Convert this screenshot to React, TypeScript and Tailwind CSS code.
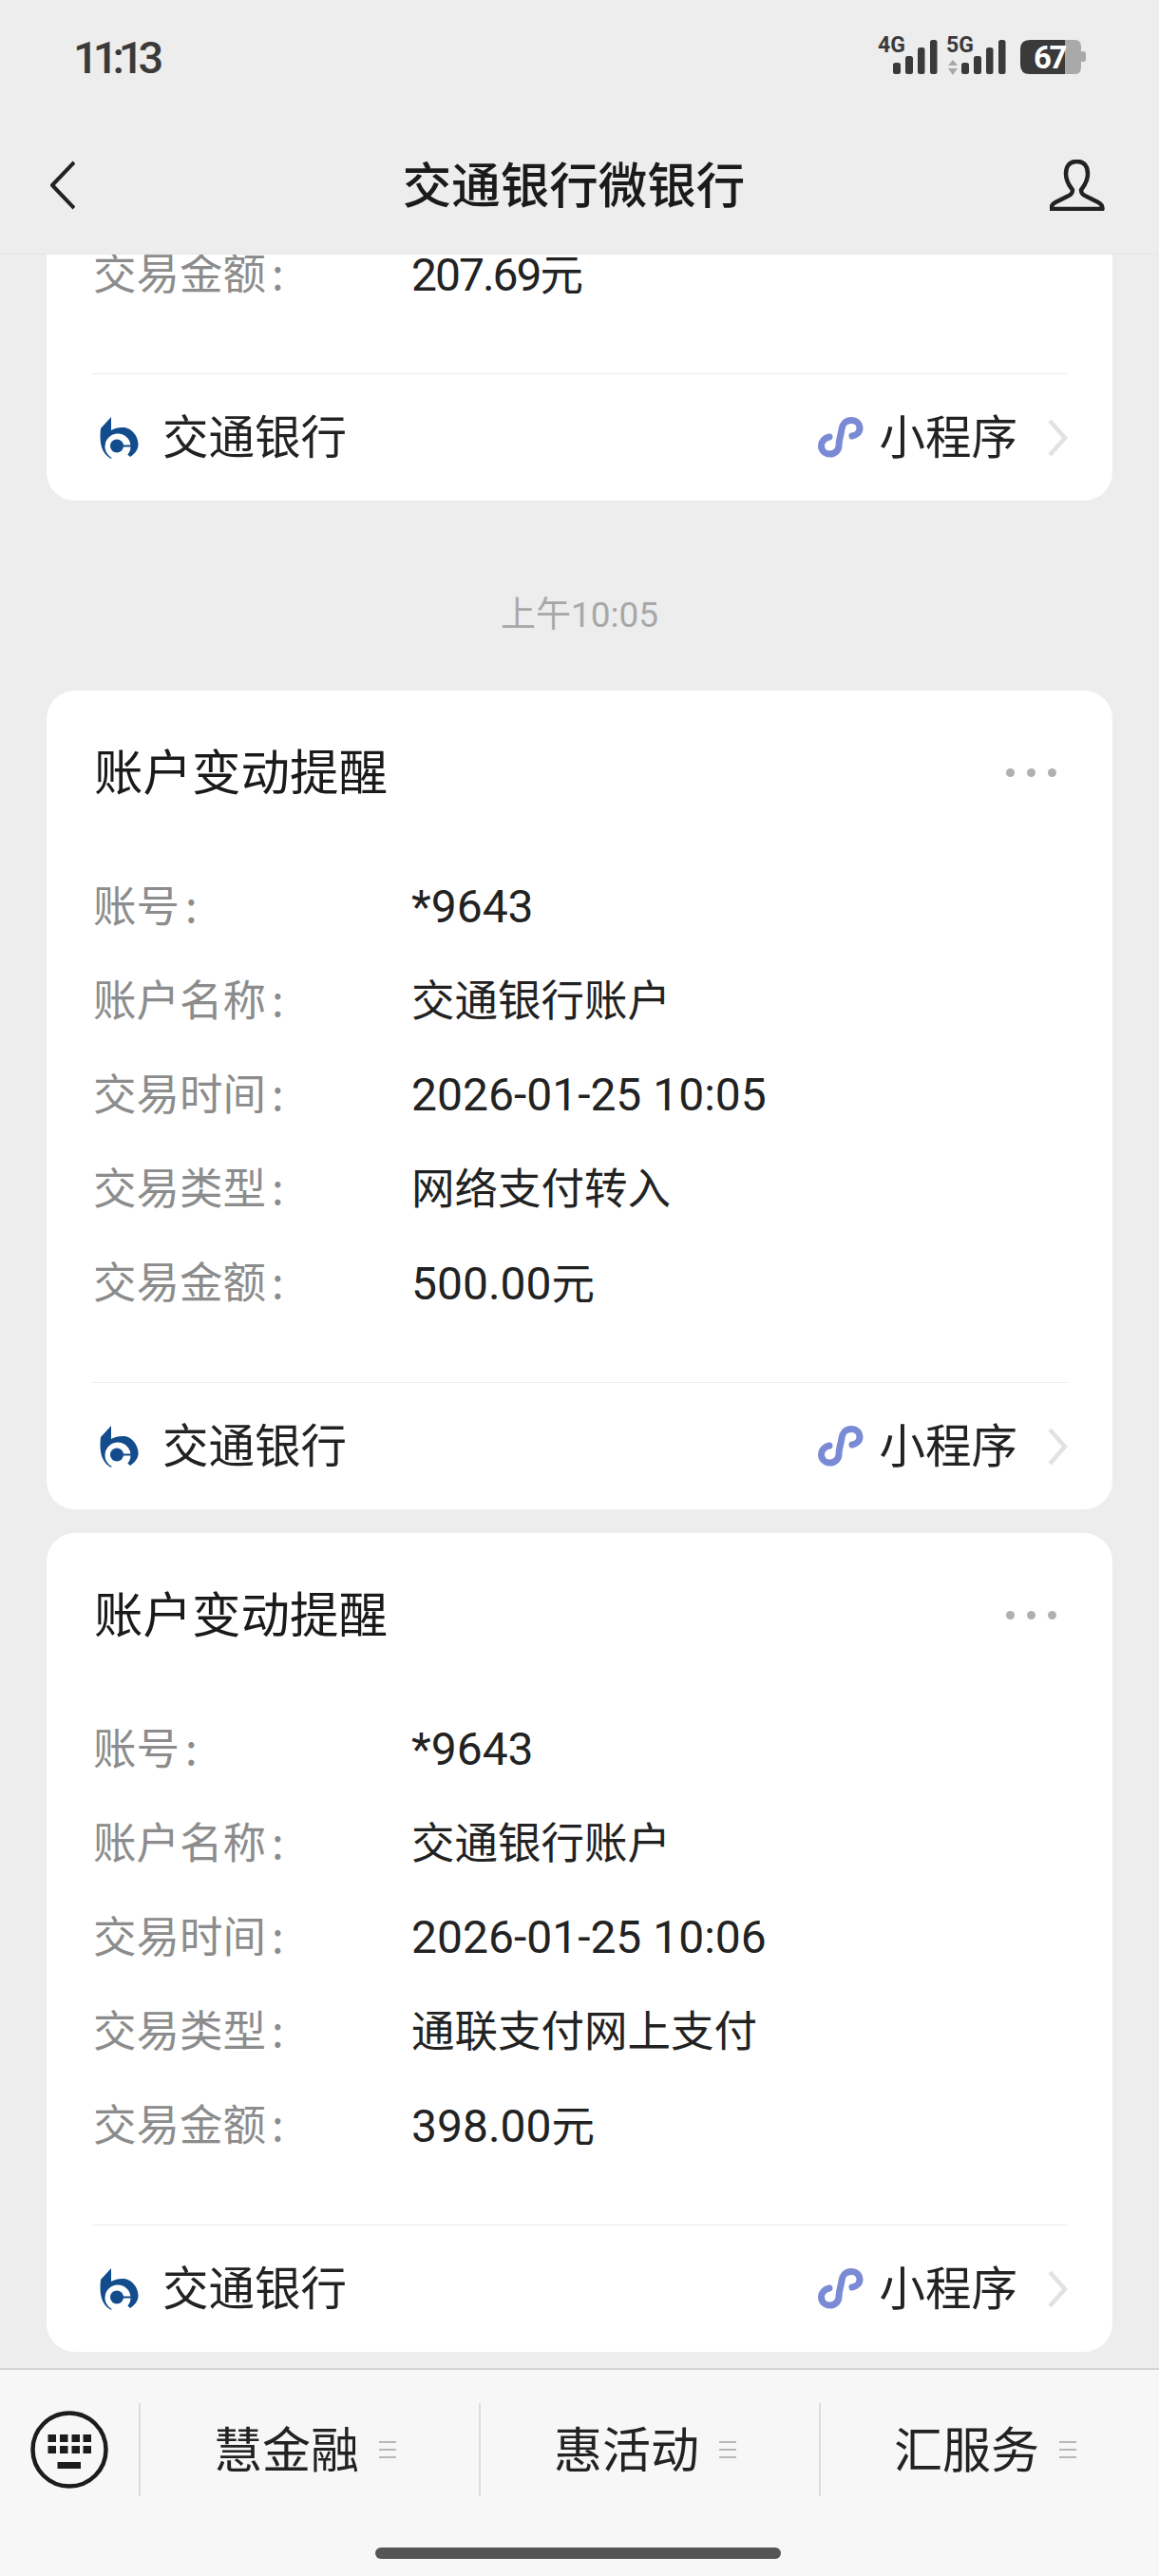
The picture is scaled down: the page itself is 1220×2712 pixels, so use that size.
const cards = [
  {
    id: 'a',
    time: '2026-01-25 10:05',
    type: '网络支付转入',
    amount: '500.00',
  },
  {
    id: 'b',
    time: '2026-01-25 10:06',
    type: '通联支付网上支付',
    amount: '398.00',
  },
];

function BankLogo() {
  return (
    <svg width="54" height="56" viewBox="0 0 54 56" className="shrink-0">
      <path
        d="M17 6 L6 18 C4.5 32 6 44 17 50 L24 36 L37 48 C43 44 46 39 45.5 34 C45 26 39 18 31 17 C26 16.5 21 17.5 17 20 Z"
        fill="#124c8c"
      />
      <circle cx="24" cy="37" r="13.5" fill="#fff" />
      <circle cx="23" cy="36.5" r="7" fill="#124c8c" />
      <path d="M23 36.5 H40" stroke="#124c8c" strokeWidth="2" />
    </svg>
  );
}

function MiniIcon() {
  return (
    <svg width="48" height="43" viewBox="0 0 48 43" className="shrink-0">
      <path
        d="M36 20 C41 19 44 16 44 12 C44 7 40 3.5 35 3.5 C29 3.5 25.5 8 25 13 C24 20 22 24 22 30 C22 35 18 39 12.5 39 C7 39 3.5 35 3.5 30 C3.5 26 7 22 12 21"
        fill="none"
        stroke="#7b8ad4"
        strokeWidth="7"
        strokeLinecap="round"
      />
    </svg>
  );
}

function Footer() {
  return (
    <div className="flex h-[133px] items-center justify-between pl-[51px] pr-[46px]">
      <div className="flex items-center gap-[17px]">
        <BankLogo />
        <span className="pb-[7px] text-[48.5px] leading-none text-[#222]">交通银行</span>
      </div>
      <div className="flex items-center">
        <MiniIcon />
        <span className="ml-[16px] pb-[7px] text-[48.5px] leading-none text-[#222]">小程序</span>
        <svg width="24" height="42" viewBox="0 0 24 42" className="ml-[30px]">
          <path d="M4 3 L20 21 L4 39" fill="none" stroke="#e2e2e2" strokeWidth="4.5" />
        </svg>
      </div>
    </div>
  );
}

function Row({ label, num, cjk, tight }: { label: string; num?: string; cjk?: string; tight?: boolean }) {
  return (
    <div className="flex h-[99px] items-center pl-[49px]">
      <span className="w-[335px] shrink-0 pb-[6px] text-[45.5px] text-[#8c8c8c]">
        {label}
        <span className="ml-[6px]">:</span>
      </span>
      <span className={num ? 'text-[#222]' : 'pb-[6px] text-[#222]'}>
        {num && (
          <span className={tight ? "font-['Roboto',sans-serif] text-[48px] tracking-[-2px]" : "font-['Roboto',sans-serif] text-[48px]"}>
            {num}
          </span>
        )}
        {cjk && <span className="text-[45.5px]">{cjk}</span>}
      </span>
    </div>
  );
}

function Card({ time, type, amount }: { time: string; type: string; amount: string }) {
  return (
    <div className="mx-[49px] rounded-[30px] bg-white pt-[56px]">
      <div className="flex h-[60px] items-center justify-between pl-[50px] pr-[59px]">
        <span className="pb-[6px] text-[51.5px] leading-none text-[#1a1a1a]">账户变动提醒</span>
        <div className="flex gap-[13px]">
          <div className="h-[9px] w-[9px] rounded-full bg-[#b0b0b0]" />
          <div className="h-[9px] w-[9px] rounded-full bg-[#b0b0b0]" />
          <div className="h-[9px] w-[9px] rounded-full bg-[#b0b0b0]" />
        </div>
      </div>
      <div className="mt-[62px] mb-[55px]">
        <Row label="账号" num="*9643" />
        <Row label="账户名称" cjk="交通银行账户" />
        <Row label="交易时间" num={time} />
        <Row label="交易类型" cjk={type} />
        <Row label="交易金额" num={amount} cjk="元" />
      </div>
      <div className="mx-[48px] border-t border-[#ececec]" />
      <Footer />
    </div>
  );
}

function StatusIcons() {
  return (
    <svg width="300" height="80" viewBox="0 0 300 80">
      <text x="44" y="35" fontSize="23" fontWeight="700" fontFamily="Roboto, sans-serif" fill="#3a3a3a">4G</text>
      <rect x="60" y="46" width="8" height="12" rx="2.5" fill="#3a3a3a" />
      <rect x="73" y="39" width="8" height="19" rx="2.5" fill="#3a3a3a" />
      <rect x="86" y="30" width="7.5" height="28" rx="2.5" fill="#3a3a3a" />
      <rect x="99" y="22" width="7.5" height="36" rx="2.5" fill="#3a3a3a" />
      <text x="116" y="35" fontSize="23" fontWeight="700" fontFamily="Roboto, sans-serif" fill="#3a3a3a">5G</text>
      <path d="M123 43 L128 49 H118 Z M118 52 H128 L123 59 Z" fill="#a8a8a8" />
      <rect x="132" y="46" width="8" height="12" rx="2.5" fill="#3a3a3a" />
      <rect x="145" y="39" width="8" height="19" rx="2.5" fill="#3a3a3a" />
      <rect x="158" y="30" width="7.5" height="28" rx="2.5" fill="#3a3a3a" />
      <rect x="171" y="22" width="7.5" height="36" rx="2.5" fill="#3a3a3a" />
      <path d="M204 22 H241 V58 H204 Q194 58 194 48 V32 Q194 22 204 22 Z" fill="#3a3a3a" />
      <path d="M241 22 H252 Q258 22 258 30 V50 Q258 58 252 58 H241 Z" fill="#a9a9a9" />
      <rect x="257" y="34" width="6" height="11" rx="2.5" fill="#a9a9a9" />
      <text x="208" y="52" fontSize="33" fontWeight="700" letterSpacing="-2.5" fontFamily="Roboto, sans-serif" fill="#fff">67</text>
    </svg>
  );
}

function Header() {
  return (
    <header className="relative z-10 h-[268px] shrink-0 border-b border-[#e6e6e6] bg-[#ededed]">
      <div className="flex h-[100px] items-center justify-between pt-[20px] pl-[77px] pr-[40px]">
        <span className="font-['Roboto',sans-serif] text-[47px] font-medium leading-none tracking-[-6px] text-[#3a3a3a]">
          11:13
        </span>
        <StatusIcons />
      </div>
      <div className="mt-[60px] flex h-[70px] items-center justify-between pl-[53px] pr-[57px]">
        <div className="w-[50px]">
          <svg width="26" height="52" viewBox="0 0 26 52">
            <path d="M25 2 L2 26 L25 50" fill="none" stroke="#222" strokeWidth="4" strokeLinejoin="round" />
          </svg>
        </div>
        <span className="pb-[6px] text-[51.5px] font-medium leading-none text-[#1a1a1a]">交通银行微银行</span>
        <svg width="58" height="54" viewBox="16 18 58 54">
          <path
            d="M44.5 20 C36 20 33 26 33 33 C33 42 38 47 40 50 C40 54 38 55 34 57 L22 63 C18 65 17.5 67 17.5 70 H71.5 C71.5 67 71 65 67 63 L55 57 C51 55 49 54 49 50 C51 47 56 42 56 33 C56 26 53 20 44.5 20 Z"
            fill="none"
            stroke="#222"
            strokeWidth="4.5"
            strokeLinejoin="round"
          />
        </svg>
      </div>
    </header>
  );
}

function TabMenu({ label }: { label: string }) {
  return (
    <div className="flex w-[358px] items-center justify-center gap-[21px] border-l-2 border-[#dcdcdc] pr-[10px]">
      <span className="pb-[6px] text-[51px] leading-none text-[#222]">{label}</span>
      <div className="flex w-[18px] flex-col gap-[6px]">
        <div className="h-[2px] bg-[#b8b8b8]" />
        <div className="h-[2px] bg-[#b8b8b8]" />
        <div className="h-[2px] bg-[#b8b8b8]" />
      </div>
    </div>
  );
}

function BottomBar() {
  return (
    <footer className="h-[219px] shrink-0 border-t-2 border-[#d4d4d4] bg-[#f7f7f7] pt-[35px]">
      <div className="flex h-[98px]">
        <div className="flex w-[146px] shrink-0 items-center pl-[32px]">
          <svg width="82" height="82" viewBox="0 0 82 82">
            <ellipse cx="41" cy="41" rx="38.5" ry="38.5" fill="none" stroke="#1c1c1c" strokeWidth="4.5" />
            <g fill="#1c1c1c">
              <rect x="18.5" y="25" width="8.5" height="8" />
              <rect x="31" y="25" width="8.5" height="8" />
              <rect x="43.5" y="25" width="8.5" height="8" />
              <rect x="55.5" y="25" width="8.5" height="8" />
              <rect x="18.5" y="37" width="8.5" height="8" />
              <rect x="31" y="37" width="8.5" height="8" />
              <rect x="43.5" y="37" width="8.5" height="8" />
              <rect x="55.5" y="37" width="8.5" height="8" />
              <rect x="28.5" y="54" width="24.5" height="7" />
            </g>
          </svg>
        </div>
        <TabMenu label="慧金融" />
        <TabMenu label="惠活动" />
        <TabMenu label="汇服务" />
      </div>
      <div className="ml-[395px] mt-[54px] h-[12px] w-[427px] rounded-full bg-[#555]" />
    </footer>
  );
}

export default function App() {
  return (
    <div className="flex h-[2712px] w-[1220px] flex-col overflow-hidden bg-[#ededed] font-['Noto_Sans_CJK_SC',sans-serif]">
      <Header />
      <main className="min-h-0 flex-1 overflow-hidden">
        {/* top card scrolled under the header */}
        <div className="mx-[49px] -mt-[29px] rounded-b-[30px] bg-white">
          <Row label="交易金额" num="207.69" cjk="元" tight />
          <div className="mx-[48px] mt-[55px] border-t border-[#ececec]" />
          <Footer />
        </div>

        <div className="flex h-[200px] items-center justify-center pt-[42px] font-['Roboto','Noto_Sans_CJK_SC',sans-serif] text-[37px] text-[#a8a8a8]">
          上午10:05
        </div>

        <div className="flex flex-col gap-[25px]">
          {cards.map((c) => (
            <Card key={c.id} time={c.time} type={c.type} amount={c.amount} />
          ))}
        </div>
      </main>
      <BottomBar />
    </div>
  );
}
